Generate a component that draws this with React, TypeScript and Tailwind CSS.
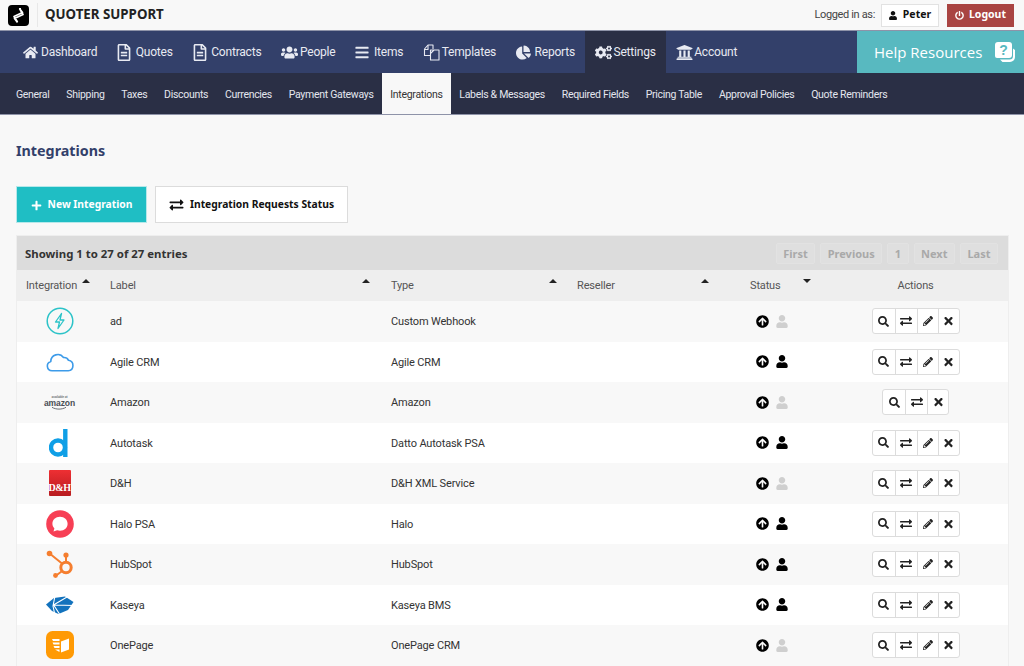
import type { ReactNode } from "react";
import {
  FaArrowCircleUp,
  FaChartPie,
  FaCogs,
  FaExchangeAlt,
  FaHome,
  FaPencilAlt,
  FaPlus,
  FaPowerOff,
  FaRegFileAlt,
  FaSearch,
  FaTimes,
  FaUniversity,
  FaUser,
  FaUsers,
  FaBars,
} from "react-icons/fa";

function TemplatesIcon() {
  return (
    <svg width="17" height="17" viewBox="0 0 17 17" fill="none" stroke="currentColor" strokeWidth="1.1" strokeLinejoin="round">
      <path d="M7.500 11.500H1.500V5l3.500-4h5v4" />
      <path d="M1.500 5.500h3.500V1" />
      <path d="M7.500 6h8.500v10H7.500zM7.500 9.500 11 6" />
    </svg>
  );
}

const mainNav = [
  { label: "Dashboard", icon: <FaHome className="h-[15px] w-[15px]" /> },
  { label: "Quotes", icon: <FaRegFileAlt className="h-[17px] w-[14px]" /> },
  { label: "Contracts", icon: <FaRegFileAlt className="h-[17px] w-[14px]" /> },
  { label: "People", icon: <FaUsers className="h-[19px] w-[17px]" /> },
  { label: "Items", icon: <FaBars className="h-[15px] w-[14px]" /> },
  { label: "Templates", icon: <TemplatesIcon /> },
  { label: "Reports", icon: <FaChartPie className="h-[15px] w-[15px]" /> },
  { label: "Settings", icon: <FaCogs className="h-[17px] w-[17px]" />, active: true },
  { label: "Account", icon: <FaUniversity className="h-[17px] w-[17px]" /> },
];

const subNav = [
  "General",
  "Shipping",
  "Taxes",
  "Discounts",
  "Currencies",
  "Payment Gateways",
  "Integrations",
  "Labels & Messages",
  "Required Fields",
  "Pricing Table",
  "Approval Policies",
  "Quote Reminders",
];

const rows: { logo: ReactNode; label: string; type: string; user: boolean; edit: boolean }[] = [
  { logo: <BoltLogo />, label: "ad", type: "Custom Webhook", user: false, edit: true },
  { logo: <CloudLogo />, label: "Agile CRM", type: "Agile CRM", user: true, edit: true },
  { logo: <AmazonLogo />, label: "Amazon", type: "Amazon", user: false, edit: false },
  { logo: <DattoLogo />, label: "Autotask", type: "Datto Autotask PSA", user: true, edit: true },
  { logo: <DhLogo />, label: "D&H", type: "D&H XML Service", user: false, edit: true },
  { logo: <HaloLogo />, label: "Halo PSA", type: "Halo", user: true, edit: true },
  { logo: <HubspotLogo />, label: "HubSpot", type: "HubSpot", user: true, edit: true },
  { logo: <KaseyaLogo />, label: "Kaseya", type: "Kaseya BMS", user: true, edit: true },
  { logo: <OnePageLogo />, label: "OnePage", type: "OnePage CRM", user: false, edit: true },
];

function BoltLogo() {
  return (
    <svg width="28" height="28" viewBox="0 0 28 28" fill="none" stroke="#2cc3c8">
      <circle cx="14" cy="14" r="12.800" strokeWidth="1.500" />
      <path d="M15.500 6.500 9.500 15h4l-1.500 6.500 6-8.500h-4z" strokeWidth="1.300" strokeLinejoin="round" />
    </svg>
  );
}

function CloudLogo() {
  return (
    <svg width="28" height="20" viewBox="0 0 28 20" fill="none" stroke="#3d9be9" strokeWidth="1.600">
      <path d="M6 18.800a4.800 4.800 0 0 1-1.200-9.400A7 7 0 0 1 17.500 5.500a5 5 0 0 1 5 2.800 5.300 5.300 0 0 1-.3 10.500z" strokeLinejoin="round" />
    </svg>
  );
}

function AmazonLogo() {
  return (
    <div className="flex flex-col items-center leading-none text-[#4a4f55]">
      <span className="text-[3.500px] leading-[4px]">available at</span>
      <span className="font-['Liberation_Sans',sans-serif] text-[8.500px] font-bold leading-[8px] tracking-[-0.1px]">amazon</span>
      <svg width="16" height="3" viewBox="0 0 16 3" fill="none" stroke="#5a5f65" strokeWidth="0.9">
        <path d="M1 .3c4 2.400 10 2.400 14 0" />
      </svg>
    </div>
  );
}

function DattoLogo() {
  return (
    <svg width="19" height="28" viewBox="0 0 19 28" fill="none" stroke="#0f9fe6" className="-ml-[2px]">
      <circle cx="9" cy="18.500" r="7" strokeWidth="4.400" />
      <path d="M16.300 0v28" strokeWidth="4.400" />
    </svg>
  );
}

function DhLogo() {
  return (
    <div className="flex h-[26px] w-[22px] flex-col justify-end rounded-[1px] bg-gradient-to-b from-[#ee2f33] to-[#b81c20] pb-[3px] text-center font-['Liberation_Serif',serif] text-[10px] font-bold leading-[10px] tracking-[-0.5px] text-white">
      D&amp;H
    </div>
  );
}

function HaloLogo() {
  return (
    <svg width="28" height="28" viewBox="0 0 28 28">
      <circle cx="14" cy="14" r="13.800" fill="#f73f55" />
      <path d="M14 6.800c4.500 0 7.600 3 7.600 7s-3.100 7-7.600 7c-1 0-2-.2-2.900-.5L7.500 21.500l.9-3.100c-1.300-1.300-2-2.900-2-4.600 0-4 3.100-7 7.600-7z" fill="#fff" />
    </svg>
  );
}

function HubspotLogo() {
  return (
    <svg width="28" height="28" viewBox="0 0 28 28" fill="none" stroke="#f57e2f">
      <circle cx="20" cy="17.500" r="5.200" strokeWidth="3" />
      <path d="M3 3l13 10.500M20 5v7M15.500 21.500 9.500 26" strokeWidth="2" />
      <circle cx="3.500" cy="3.500" r="2.800" fill="#f57e2f" stroke="none" />
      <circle cx="20" cy="5" r="2.600" fill="#f57e2f" stroke="none" />
      <circle cx="9.500" cy="25.500" r="2.400" fill="#f57e2f" stroke="none" />
    </svg>
  );
}

function KaseyaLogo() {
  return (
    <svg width="28" height="18" viewBox="0 0 28 18">
      <path d="M0 8.500 8 2 19 .5 27.500 6 22 14 12.500 18 6 15z" fill="#1272bd" />
      <path d="M9 0 7 10 8.500 17M7.500 9 21 1M7.500 9 28 9.500M8 9.500 13.500 18" fill="none" stroke="#fff" strokeWidth="1.100" />
    </svg>
  );
}

function OnePageLogo() {
  return (
    <svg width="28" height="28" viewBox="0 0 28 28">
      <rect width="28" height="28" rx="6.500" fill="#ff9a05" />
      <path d="M15 10.500 23 7.500v11l-8 3z" fill="#fff" />
      <path d="M6 8h7.500v2H7zM6.500 11.500h7v2H7.500zM7.500 15h6v2H8.500zM9 18.500h4.500v2.500z" fill="#fff" />
    </svg>
  );
}

function QuoterLogo() {
  return (
    <svg width="21" height="21" viewBox="0 0 21 21" className="shrink-0">
      <rect width="21" height="21" rx="4" fill="#000" />
      <path d="M11.500 3.500 14.500 7.500 6 11.500 9.500 17M9.500 17.500 6.500 13.500 15 9.500 11.500 3.500" fill="none" stroke="#fff" strokeWidth="1.700" strokeLinejoin="round" />
    </svg>
  );
}

function HelpIcon() {
  return (
    <svg width="22" height="22" viewBox="0 0 22 22" className="shrink-0">
      <path d="M19 7.500 21 9v7a5 5 0 0 1-5 5H8.500l-2.500-2.500h9.500a3.500 3.500 0 0 0 3.500-3.500z" fill="#fff" />
      <path d="M4 1h11a3 3 0 0 1 3 3v10a3 3 0 0 1-3 3H3a2 2 0 0 1-2-2V4a3 3 0 0 1 3-3z" fill="#fff" />
      <text x="9.500" y="14" textAnchor="middle" fontSize="14" fontWeight="700" fill="#58b9c0" fontFamily="Liberation Sans, sans-serif">?</text>
    </svg>
  );
}

function SortArrow({ up = true, className = "" }: { up?: boolean; className?: string }) {
  return (
    <span
      className={`absolute h-0 w-0 border-x-[4px] border-x-transparent ${up ? "border-b-[4px] border-b-[#222]" : "border-t-[4px] border-t-[#222]"} ${className}`}
    />
  );
}

function PageButton({ children }: { children: ReactNode }) {
  return (
    <span className="flex h-[21px] items-center rounded-[2px] border border-[#e2e2e2] bg-[#dfdfdf] px-[6.500px] pt-[1px] font-['Noto_Sans',sans-serif] text-[11px] font-bold text-[#a9a9a9]">
      {children}
    </span>
  );
}

function ActionCell({ children, wide }: { children: ReactNode; wide?: boolean }) {
  return (
    <span className={`flex h-full items-center justify-center border-l border-[#dcdcdc] first:border-l-0 ${wide ? "w-[22px]" : "w-[21px]"}`}>
      {children}
    </span>
  );
}

export default function App() {
  return (
    <div className="h-[666px] w-[1024px] overflow-hidden bg-[#f8f8f8] font-['Roboto',sans-serif] text-[#333]">
      {/* Top bar */}
      <header className="flex h-[31px] items-center border-b border-[#8e93a8] pl-[8px] pr-[10px]">
        <QuoterLogo />
        <div className="ml-[8px] h-[24px] w-px bg-[#e8e8e8]" />
        <span className="ml-[7px] font-['Noto_Sans',sans-serif] text-[13.300px] font-bold text-[#222]">QUOTER SUPPORT</span>
        <div className="ml-auto flex items-center">
          <span className="text-[11px] tracking-[-0.35px] text-[#444]">Logged in as:</span>
          <span className="ml-[6px] flex h-[23px] w-[58px] items-center justify-center gap-[6px] border border-[#e2e2e2] bg-white font-['Noto_Sans',sans-serif] text-[10.500px] font-bold text-[#111]">
            <FaUser className="h-[9px] w-[8px]" />
            Peter
          </span>
          <span className="ml-[8px] flex h-[23px] w-[67px] items-center justify-center gap-[5px] bg-[#a94442] font-['Noto_Sans',sans-serif] text-[10.500px] font-bold text-white">
            <FaPowerOff className="h-[9px] w-[9px]" />
            Logout
          </span>
        </div>
      </header>

      {/* Main nav */}
      <nav className="flex h-[42px] bg-[#33406a] pl-[12.500px] text-[12px] tracking-[-0.2px] text-[#e8eaf2]">
        {mainNav.map((item) => (
          <a
            key={item.label}
            className={`flex items-center px-[10px] ${item.active ? "bg-[#2a2f45]" : ""}`}
          >
            <span className="w-[18.500px] shrink-0">{item.icon}</span>
            <span>{item.label}</span>
          </a>
        ))}
        <div className="ml-auto flex w-[167px] items-center gap-[12px] bg-[#58b9c0] pl-[17px] text-[15px] tracking-normal text-white">
          <span className="font-['Open_Sans',sans-serif]">Help Resources</span>
          <HelpIcon />
        </div>
      </nav>

      {/* Settings tabs */}
      <nav className="flex h-[42px] items-stretch border-b border-[#8e93a8] bg-[#2a2f45] pl-[7.500px] text-[10.500px] tracking-[-0.3px] text-[#e4e6ee]">
        {subNav.map((item) => (
          <a
            key={item}
            className={`flex items-center px-[8.400px] pt-[2px] ${item === "Integrations" ? "bg-[#f8f8f8] text-[#333]" : ""}`}
          >
            {item}
          </a>
        ))}
      </nav>

      <main className="px-[16px]">
        <h1 className="mt-[26px] font-['Noto_Sans',sans-serif] text-[14.300px] font-bold leading-[20px] text-[#33406a]">Integrations</h1>

        <div className="mt-[25px] flex gap-[8px]">
          <button className="flex h-[37px] w-[131px] items-center justify-center gap-[6px] border border-[#b6e8ea] bg-[#1fbec4] pt-[1px] font-['Noto_Sans',sans-serif] text-[10.300px] font-bold text-white">
            <FaPlus className="h-[11px] w-[11px]" />
            New Integration
          </button>
          <button className="flex h-[37px] w-[193px] items-center justify-center gap-[6px] border border-[#dcdcdc] bg-white pt-[1px] font-['Noto_Sans',sans-serif] text-[10.300px] font-bold text-[#111]">
            <FaExchangeAlt className="h-[14px] w-[15px]" />
            Integration Requests Status
          </button>
        </div>

        {/* Table */}
        <section className="mt-[12px] w-[993px] border border-[#eeeeee]">
          <div className="flex h-[34px] items-center justify-between bg-[#dcdcdc] pl-[8px] pr-[10px] pt-[1px]">
            <span className="font-['Noto_Sans',sans-serif] text-[11.400px] font-bold text-[#333]">Showing 1 to 27 of 27 entries</span>
            <div className="flex gap-[5px]">
              <PageButton>First</PageButton>
              <PageButton>Previous</PageButton>
              <PageButton>1</PageButton>
              <PageButton>Next</PageButton>
              <PageButton>Last</PageButton>
            </div>
          </div>

          <div className="relative grid h-[31px] grid-cols-[93px_281px_186px_173px_73px_1fr] items-center bg-[#eeeeee] pt-[2px] text-[11px] tracking-[-0.15px] text-[#555]">
            <span className="pl-[9px]">Integration</span>
            <span>Label</span>
            <span>Type</span>
            <span>Reseller</span>
            <span>Status</span>
            <span className="text-center">Actions</span>
            <SortArrow className="left-[65px] top-[9px]" />
            <SortArrow className="left-[345px] top-[9px]" />
            <SortArrow className="left-[532px] top-[9px]" />
            <SortArrow className="left-[684px] top-[9px]" />
            <SortArrow up={false} className="left-[786px] top-[9px]" />
          </div>

          {rows.map((row, i) => (
            <div
              key={row.label}
              className={`grid h-[40.500px] grid-cols-[93px_281px_186px_173px_73px_1fr] items-center text-[11px] tracking-[-0.15px] text-[#333] ${i % 2 === 0 ? "bg-[#f8f8f8]" : "bg-white"}`}
            >
              <span className="flex justify-center pl-[1px] pr-[9px]">{row.logo}</span>
              <span className="pt-[2px]">{row.label}</span>
              <span className="pt-[2px]">{row.type}</span>
              <span />
              <span className="flex items-center gap-[7px] pl-[6px]">
                <FaArrowCircleUp className="h-[13px] w-[13px] text-black" />
                <FaUser className={`h-[13px] w-[12px] ${row.user ? "text-black" : "text-[#cfcfcf]"}`} />
              </span>
              <span className="flex justify-center">
                <span className="flex h-[26px] items-center rounded-[3px] border border-[#dcdcdc] bg-white text-[#222]">
                  <ActionCell wide><FaSearch className="h-[11px] w-[11px]" /></ActionCell>
                  <ActionCell wide><FaExchangeAlt className="h-[12px] w-[12px]" /></ActionCell>
                  {row.edit && <ActionCell><FaPencilAlt className="h-[10px] w-[10px]" /></ActionCell>}
                  <ActionCell><FaTimes className="h-[12px] w-[9px]" /></ActionCell>
                </span>
              </span>
            </div>
          ))}
        </section>
      </main>
    </div>
  );
}
